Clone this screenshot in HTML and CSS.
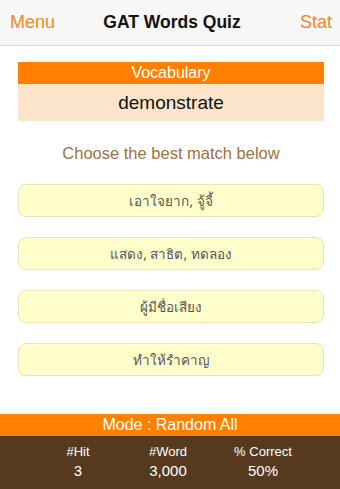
FILE: index.html
```html
<!DOCTYPE html>
<html>
<head>
<meta charset="utf-8">
<link rel="stylesheet" href="styles.css">
</head>
<body>
<div class="app">
  <header class="nav">
    <span class="nav-btn nav-left">Menu</span>
    <span class="nav-title">GAT Words Quiz</span>
    <span class="nav-btn nav-right">Stat</span>
  </header>
  <main class="main">
    <section class="vocab">
      <div class="vocab-head">Vocabulary</div>
      <div class="vocab-word">demonstrate</div>
    </section>
    <p class="prompt">Choose the best match below</p>
    <div class="choices">
      <div class="choice">เอาใจยาก, จู้จี้</div>
      <div class="choice">แสดง, สาธิต, ทดลอง</div>
      <div class="choice">ผู้มีชื่อเสียง</div>
      <div class="choice">ทำให้รำคาญ</div>
    </div>
  </main>
  <footer class="footer">
    <div class="mode">Mode : Random All</div>
    <div class="stats">
      <div class="stat"><span>#Hit</span><span class="val">3</span></div>
      <div class="stat"><span>#Word</span><span class="val">3,000</span></div>
      <div class="stat"><span>% Correct</span><span class="val">50%</span></div>
    </div>
  </footer>
</div>
</body>
</html>
```
FILE: styles.css
```css
html, body {
  margin: 0;
  padding: 0;
  background: #ffffff;
}
body {
  font-family: "Liberation Sans", Arial, "Noto Sans", sans-serif;
}
.app {
  width: 340px;
  height: 489px;
  display: flex;
  flex-direction: column;
  overflow: hidden;
}
.nav {
  height: 45px;
  flex: none;
  background: #f7f7f7;
  border-bottom: 1px solid #d8d8d8;
  display: grid;
  grid-template-columns: 1fr auto 1fr;
  align-items: center;
  padding: 0 8px 0 10px;
}
.nav-btn {
  color: #f2862a;
  font-size: 18px;
}
.nav-right {
  justify-self: end;
}
.nav-title {
  font-weight: bold;
  font-size: 17.5px;
  color: #111;
  position: relative;
  left: 1px;
}
.main {
  flex: 1;
  display: flex;
  flex-direction: column;
  padding: 16px 16px 0 18px;
}
.vocab-head {
  height: 22px;
  background: #ff8000;
  color: #fff;
  font-size: 16px;
  text-align: center;
  line-height: 22px;
}
.vocab-word {
  height: 37px;
  background: #fde5cb;
  color: #111;
  font-size: 19px;
  text-align: center;
  line-height: 37px;
}
.prompt {
  margin: 23px 0 0;
  text-align: center;
  color: #a0703f;
  font-size: 16.5px;
  line-height: 19px;
}
.choices {
  margin-top: 21px;
  display: flex;
  flex-direction: column;
  gap: 20px;
}
.choice {
  height: 31px;
  background: #ffffcc;
  border: 1px solid #e8e3b8;
  border-radius: 8px;
  display: flex;
  align-items: center;
  justify-content: center;
  font-size: 13.5px;
  color: #555;
  font-family: "Noto Sans", "DejaVu Sans", sans-serif;
}
.footer {
  flex: none;
}
.mode {
  height: 22px;
  background: #ff8000;
  color: #fff;
  text-align: center;
  font-size: 16px;
  line-height: 22px;
}
.stats {
  height: 53px;
  background: #553a20;
  display: grid;
  grid-template-columns: 90px 90px 100px;
  padding-left: 33px;
  padding-top: 7px;
  box-sizing: border-box;
}
.stat {
  display: flex;
  flex-direction: column;
  align-items: center;
  color: #fff;
  font-size: 13px;
  line-height: 18px;
}
.stat .val {
  font-size: 15px;
  line-height: 20px;
}
```
